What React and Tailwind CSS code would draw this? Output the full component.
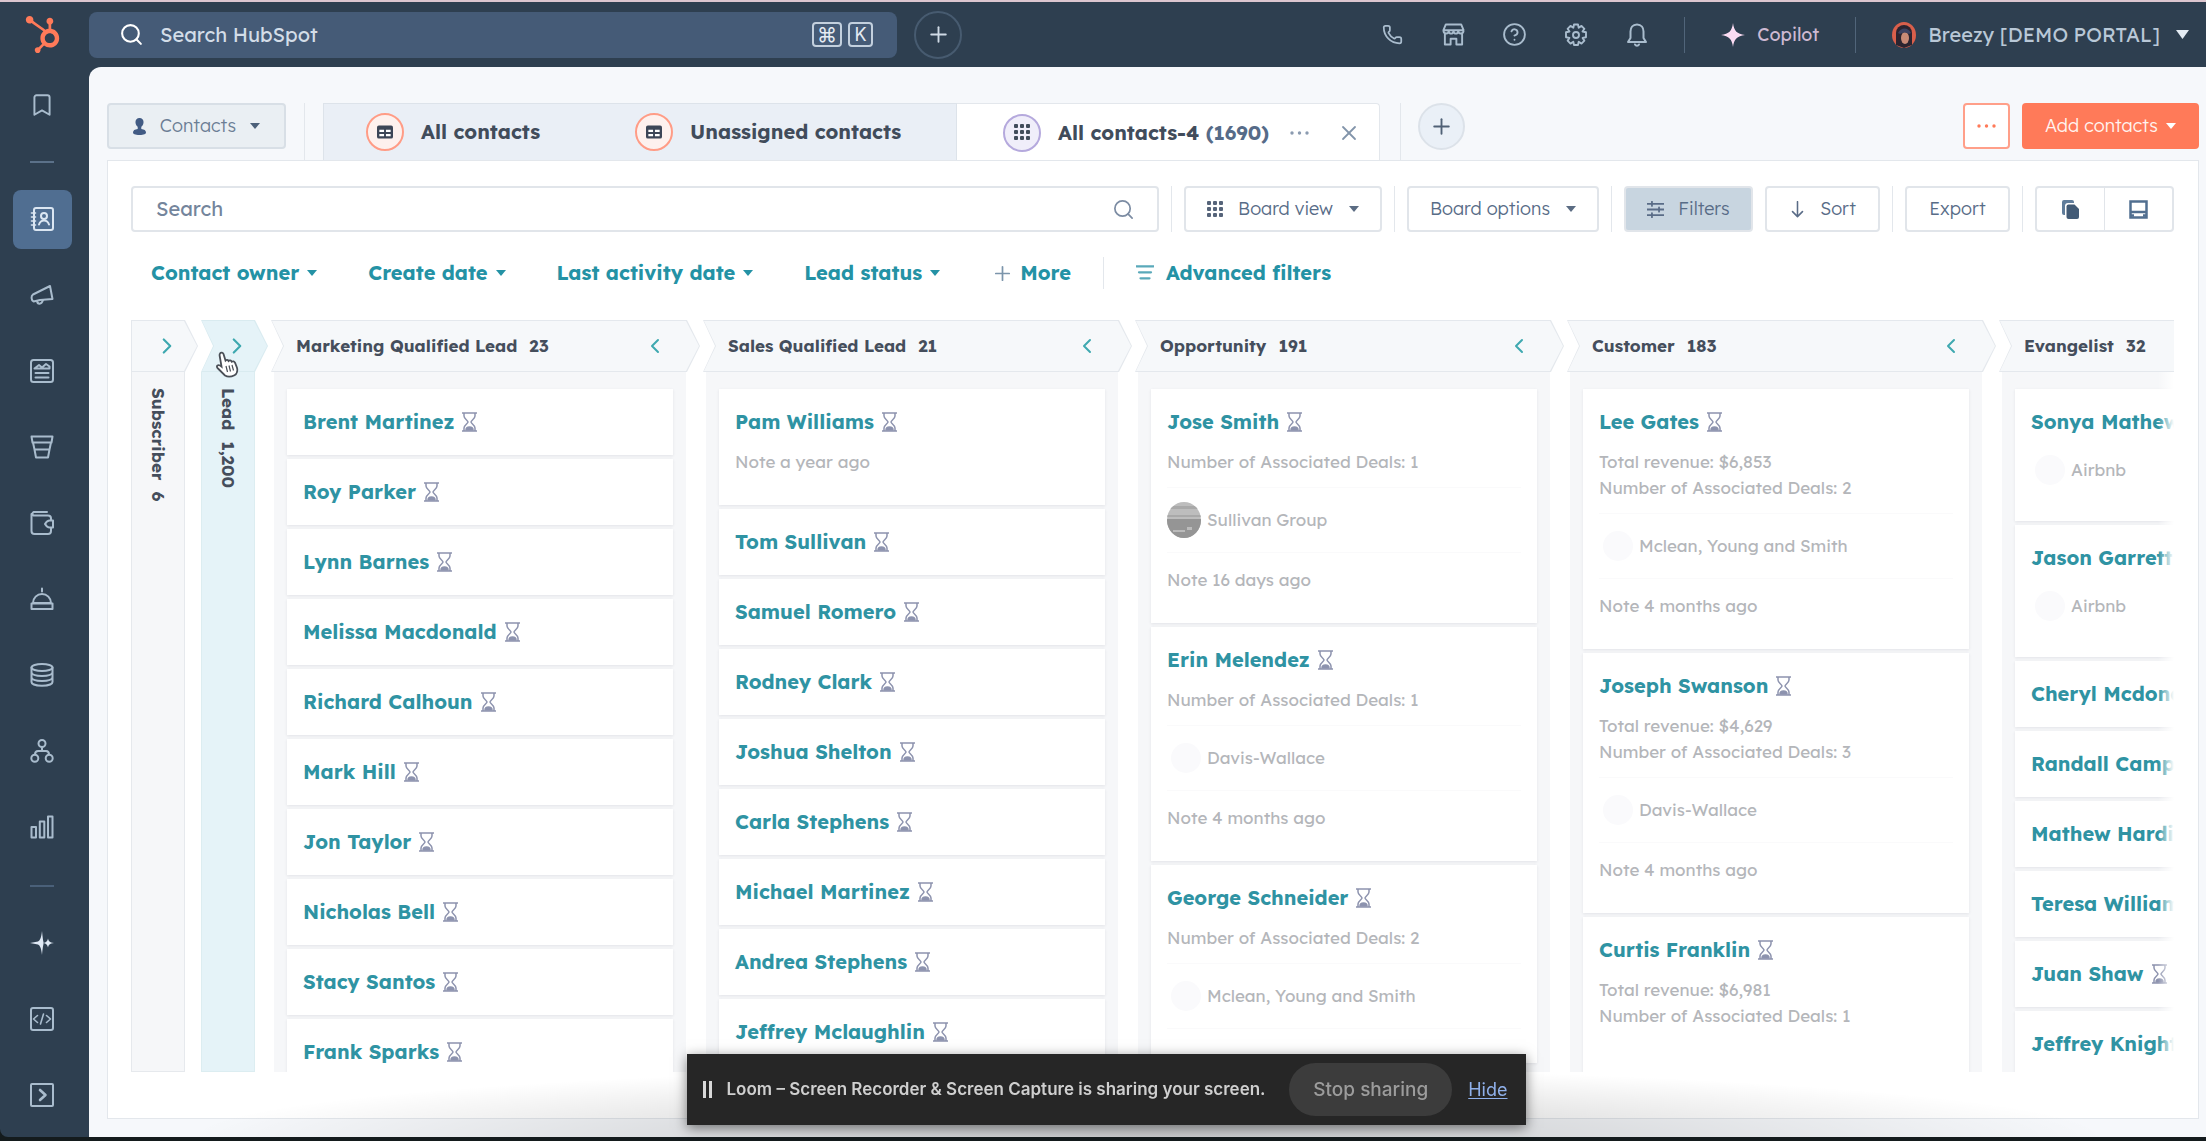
import React from "react";
import { FaHubspot } from "react-icons/fa6";
import {
  Bookmark,
  ChevronLeft,
  ChevronRight,
  CircleHelp,
  Phone,
  Plus,
  Search,
  X,
} from "lucide-react";

const Icon = ({ size = 24, width = 2, className = "", children }) => (
  <svg
    width={size}
    height={size}
    viewBox="0 0 24 24"
    fill="none"
    stroke="currentColor"
    strokeWidth={width}
    strokeLinecap="round"
    strokeLinejoin="round"
    className={`shrink-0 ${className}`}
    aria-hidden="true"
  >
    {children}
  </svg>
);

const ContactBook = () => (
  <Icon>
    <rect x="4" y="1" width="19" height="22" rx="2" />
    <path d="M1.5 6h4M1.5 10h4M1.5 14h4M1.5 18h4" strokeWidth="1.6" />
    <circle cx="14" cy="9" r="3" />
    <path d="M9 17.5c1-3 3-4 5-4s4 1 5 4" />
  </Icon>
);

const Horn = () => (
  <Icon>
    <path d="M20 3 22.5 16 10 17 3.5 18.5C1 17 1 13 3 11.5z" />
    <path d="M7 18c.5 3.5 4.5 4 6-1" />
  </Icon>
);

const Article = () => (
  <Icon>
    <rect x="1" y="1" width="22" height="22" rx="2.5" />
    <path d="M4.5 9.5 9 6l3 2.5 4-3.5 3.5 2.5v2zM5.5 14h13M5.5 18.5h13" />
  </Icon>
);

const Funnel = () => (
  <Icon>
    <path d="M1.5 1.5h21l-1 6h-19zM3 7.5h18l-1.5 7h-15zM4.5 14.5h15l-1.5 8H6z" />
  </Icon>
);

const WalletIcon = () => (
  <Icon>
    <path d="M21 9V7.5a3 3 0 0 0-3-3H3.5a2 2 0 0 1 0-3.5H17M1.5 3v17a3 3 0 0 0 3 3h13.5a3 3 0 0 0 3-3v-3" />
    <path d="M15 13c1.5-2.5 3-3.5 4.500-3.5H23v7h-3.500c-1.500 0-3-1-4.500-3.500z" />
  </Icon>
);

const ServiceBell = () => (
  <Icon>
    <path d="M12 1.5v3M3 16a9 9 0 0 1 18 0zM1.5 16.5h21V22h-21z" />
  </Icon>
);

const DataStack = () => (
  <Icon>
    <ellipse cx="12" cy="4.5" rx="10.5" ry="3.5" />
    <path d="M1.5 4.5V19c0 5 21 5 21 0V4.5M1.5 9.5c1 4.5 20 4.5 21 0M1.5 14.5c1 4.5 20 4.5 21 0" />
  </Icon>
);

const Nodes = () => (
  <Icon>
    <circle cx="12" cy="4.5" r="3.5" />
    <circle cx="4.8" cy="19.2" r="3.5" />
    <circle cx="19.2" cy="19.2" r="3.5" />
    <path d="M12 8v4M5 15.5C5 13 6 12 8 12h8c2 0 3 1 3 3.5" />
  </Icon>
);

const Bars = () => (
  <Icon>
    <path d="M1.5 12H6v10.5H1.5zM9.8 6.5h4.5v16H9.8zM18 1.5h4.5v21H18z" />
  </Icon>
);

const Sparkles = () => (
  <Icon className="text-[#dfe9f5]">
    <path
      d="M12 0c.6 6 1 9 1.5 11v2c-.5 2-.9 5-1.5 11-.8-7-2-9.500-4-10.500L0 12l8-1.500C10 9.500 11.200 7 12 0z"
      fill="currentColor"
      stroke="none"
    />
    <path d="M18 7.5c.7 2.8 1.500 3.800 6 4.500-4.500.7-5.300 1.700-6 4.500-.7-2.800-1.500-3.800-5-4.500 3.500-.7 4.300-1.700 5-4.500z" fill="currentColor" stroke="none" />
  </Icon>
);

const CodeBox = () => (
  <Icon>
    <rect x="1" y="1" width="22" height="22" rx="2" />
    <path d="m7.5 8.5-4 3.5 4 3.5M16.5 8.5l4 3.5-4 3.5M13.5 7l-3 10" strokeWidth="1.6" />
  </Icon>
);

const ExpandBox = () => (
  <Icon>
    <rect x="1" y="1" width="22" height="22" rx="1" />
    <path d="m10 7 5.500 5-5.500 5" strokeWidth="2.6" />
  </Icon>
);

const StoreIcon = () => (
  <Icon size={23}>
    <path d="M4 1.5h16l2.5 6H1.5zM1.5 7.5c0 4.5 5 4.5 5.5 1 .5 3.500 4.500 3.500 5 0 .5 3.500 4.500 3.500 5 0 .5 3.500 5.500 3.500 5.500-1M3 12v10.500h6v-6h6v6h6V12" />
  </Icon>
);

// Eight teeth around the hub.
const GearIcon = () => (
  <Icon size={24} width={1.9}>
    <path d="M10 1.5h4l.7 3.200 2.800-1.800 2.900 2.900-1.900 2.700 3.500.8v4.900l-3.400.7 1.800 2.800-2.900 2.900-2.800-1.800-.7 3.200h-4l-.7-3.200-2.800 1.800-2.900-2.900 1.800-2.800-3.400-.7V9.300l3.500-.8-1.900-2.700 2.900-2.900 2.800 1.800z" />
    <circle cx="12" cy="12" r="3" />
  </Icon>
);

const BellIcon = () => (
  <Icon size={24}>
    <path d="M12 1.5c-4.500 0-6.500 3.500-6.500 7V15L3 19h18l-2.500-4V8.500c0-3.500-2-7-6.500-7zM10 21.500c.8 1.500 3.200 1.500 4 0" />
  </Icon>
);

const Caret = ({ className = "" }) => (
  <svg width="10" height="6" viewBox="0 0 10 6" className={`shrink-0 ${className}`} aria-hidden="true">
    <path d="M0 0h10L5 6z" fill="currentColor" />
  </svg>
);

const GridDots = ({ className = "" }) => (
  <svg width="17" height="17" viewBox="0 0 17 17" fill="currentColor" className={`shrink-0 ${className}`} aria-hidden="true">
    {[0, 6, 12].map((y) =>
      [0, 6, 12].map((x) => <rect key={`${x}-${y}`} x={x} y={y} width="4" height="4" rx="1" />)
    )}
  </svg>
);

const TableIcon = () => (
  <svg width="16" height="14" viewBox="0 0 17 14" className="text-[#3c4657]" aria-hidden="true">
    <rect width="17" height="14" rx="2" fill="currentColor" />
    <path d="M2.5 4.5h5V7h-5zM9.5 4.5h5V7h-5zM2.5 9h5v2.500h-5zM9.5 9h5v2.500h-5z" fill="#fff" />
  </svg>
);

const Dots = () => (
  <svg width="19" height="4" viewBox="0 0 19 4" fill="currentColor" aria-hidden="true">
    <circle cx="2" cy="2" r="1.7" />
    <circle cx="9.5" cy="2" r="1.7" />
    <circle cx="17" cy="2" r="1.7" />
  </svg>
);

const Hourglass = () => (
  <svg width="15" height="20" viewBox="0 0 15 20" fill="none" stroke="currentColor" strokeWidth="1.5" className="shrink-0 text-[#8d93ae]" aria-hidden="true">
    <path d="M0 1h15M0 19h15M2 1v3c0 3 4 4.500 4 6s-4 3-4 6v3M13 1v3c0 3-4 4.500-4 6s4 3 4 6v3" />
    <path d="M4 18c0-2 1.500-3 3.500-3s3.500 1 3.500 3z" fill="currentColor" />
  </svg>
);

const NAV = [
  ["Contacts", ContactBook],
  ["Marketing", Horn],
  ["Content", Article],
  ["Sales", Funnel],
  ["Commerce", WalletIcon],
  ["Service", ServiceBell],
  ["Data", DataStack],
  ["Automations", Nodes],
  ["Reporting", Bars],
];

const NAV_BOTTOM = [
  ["Breeze", Sparkles],
  ["Development", CodeBox],
  ["Expand", ExpandBox],
];

const plain = (names) => names.map((name) => ({ name }));

const COLUMNS = [
  {
    title: "Marketing Qualified Lead",
    count: "23",
    cards: plain([
      "Brent Martinez",
      "Roy Parker",
      "Lynn Barnes",
      "Melissa Macdonald",
      "Richard Calhoun",
      "Mark Hill",
      "Jon Taylor",
      "Nicholas Bell",
      "Stacy Santos",
      "Frank Sparks",
    ]),
  },
  {
    title: "Sales Qualified Lead",
    count: "21",
    cards: [
      { name: "Pam Williams", note: "Note a year ago" },
      ...plain([
        "Tom Sullivan",
        "Samuel Romero",
        "Rodney Clark",
        "Joshua Shelton",
        "Carla Stephens",
        "Michael Martinez",
        "Andrea Stephens",
        "Jeffrey Mclaughlin",
      ]),
    ],
  },
  {
    title: "Opportunity",
    count: "191",
    cards: [
      {
        name: "Jose Smith",
        lines: ["Number of Associated Deals: 1"],
        company: "Sullivan Group",
        photo: true,
        note: "Note 16 days ago",
      },
      {
        name: "Erin Melendez",
        lines: ["Number of Associated Deals: 1"],
        company: "Davis-Wallace",
        note: "Note 4 months ago",
      },
      {
        name: "George Schneider",
        lines: ["Number of Associated Deals: 2"],
        company: "Mclean, Young and Smith",
      },
    ],
  },
  {
    title: "Customer",
    count: "183",
    cards: [
      {
        name: "Lee Gates",
        lines: ["Total revenue: $6,853", "Number of Associated Deals: 2"],
        company: "Mclean, Young and Smith",
        note: "Note 4 months ago",
      },
      {
        name: "Joseph Swanson",
        lines: ["Total revenue: $4,629", "Number of Associated Deals: 3"],
        company: "Davis-Wallace",
        note: "Note 4 months ago",
      },
      {
        name: "Curtis Franklin",
        lines: ["Total revenue: $6,981", "Number of Associated Deals: 1"],
        open: true,
      },
    ],
  },
  {
    title: "Evangelist",
    count: "32",
    cards: [
      { name: "Sonya Mathews", company: "Airbnb" },
      { name: "Jason Garrett", company: "Airbnb" },
      ...plain([
        "Cheryl Mcdonald",
        "Randall Campbell",
        "Mathew Harding",
        "Teresa Williams",
        "Juan Shaw",
        "Jeffrey Knight",
      ]),
    ],
  },
];

const NavItem = ({ label, icon: Glyph, active }) => (
  <a href="#" aria-label={label} className="flex h-[76px] items-center justify-center">
    <span
      className={
        active
          ? "flex size-[59px] items-center justify-center rounded-lg bg-[#506e91] text-[#dbe6f2]"
          : "flex size-[59px] items-center justify-center text-[#a9bccd]"
      }
    >
      <Glyph />
    </span>
  </a>
);

const Sidebar = () => (
  <aside className="flex w-[89px] shrink-0 flex-col pr-[5px] pb-1">
    <a href="#" aria-label="HubSpot" className="flex h-[65px] items-center justify-center text-[#ff7a59]">
      <FaHubspot size={37} />
    </a>
    <nav className="flex flex-1 flex-col">
      <NavItem label="Bookmarks" icon={() => <Bookmark size={26} strokeWidth={1.8} />} />
      <div className="flex h-[38px] items-center justify-center">
        <span className="h-0.5 w-6 bg-[#5b7189]" />
      </div>
      {NAV.map(([label, icon], i) => (
        <NavItem key={label} label={label} icon={icon} active={i === 0} />
      ))}
      <div className="mt-auto">
        <div className="flex h-[38px] items-center justify-center">
          <span className="h-0.5 w-6 bg-[#4a6079]" />
        </div>
        {NAV_BOTTOM.map(([label, icon]) => (
          <NavItem key={label} label={label} icon={icon} />
        ))}
      </div>
    </nav>
  </aside>
);

const TopBar = () => (
  <header className="flex h-[65px] shrink-0 items-center">
    <label className="flex h-[46px] w-[808px] items-center rounded-lg bg-[#455b77] pr-6 pl-[30px]">
      <Search size={25} className="text-white" aria-hidden="true" />
      <input
        type="text"
        placeholder="Search HubSpot"
        aria-label="Search HubSpot"
        className="ml-4 min-w-0 flex-1 bg-transparent text-xl text-white outline-none placeholder:text-[#d3dde8]"
      />
      <kbd className="flex h-[25px] w-[30px] items-center justify-center rounded border-2 border-[#c3d0de] font-[Inter,sans-serif] text-xl text-[#e4ebf3]">⌘</kbd>
      <kbd className="ml-1.5 flex h-[25px] w-[25px] items-center justify-center rounded border-2 border-[#c3d0de] font-[Inter,sans-serif] text-lg text-[#e4ebf3]">K</kbd>
    </label>
    <button aria-label="Create" className="ml-[17px] flex size-[48px] items-center justify-center rounded-full border-2 border-[#475b70] text-[#cfdae5]">
      <Plus size={25} strokeWidth={1.8} />
    </button>
    <div className="ml-auto flex items-center text-[#a9bccd]">
      <div className="flex items-center">
        <button aria-label="Calling" className="flex w-[61px] justify-center"><Phone size={21} /></button>
        <button aria-label="Marketplace" className="flex w-[61px] justify-center"><StoreIcon /></button>
        <button aria-label="Help" className="flex w-[61px] justify-center"><CircleHelp size={25} strokeWidth={1.8} /></button>
        <button aria-label="Settings" className="flex w-[61px] justify-center"><GearIcon /></button>
        <button aria-label="Notifications" className="flex w-[61px] justify-center"><BellIcon /></button>
      </div>
      <span className="ml-[17px] h-9 w-px bg-[#51657a]" />
      <button className="flex items-center px-9 text-lg text-[#cdb9d2]">
        <svg width="24" height="24" viewBox="0 0 24 24" className="mr-3" aria-hidden="true">
          <path d="M12 0c1 8 4 11 12 12-8 1-11 4-12 12-1-8-4-11-12-12C8 11 11 8 12 0z" fill="#fbdcf3" />
        </svg>
        Copilot
      </button>
      <span className="h-9 w-px bg-[#51657a]" />
      <button className="flex items-center pr-[17px] pl-9 text-xl text-[#b9c8d7]">
        <svg width="24" height="26" viewBox="0 0 24 26" className="mr-3" aria-hidden="true">
          <ellipse cx="12" cy="13" rx="12" ry="13" fill="#d95f4b" />
          <path d="M4 23V11a8 8 0 0 1 16 0v12l-8 3z" fill="#2b2430" />
          <ellipse cx="13" cy="16" rx="4" ry="6" fill="#c98a76" />
          <path d="M6 11c3-6 10-6 13 0l-2 1c-3-2-6-2-9 0z" fill="#3d4262" />
        </svg>
        Breezy [DEMO PORTAL]
        <svg width="13" height="9" viewBox="0 0 13 9" className="ml-4 text-[#e4ecf4]" aria-hidden="true">
          <path d="M0 0h13L6.500 9z" fill="currentColor" />
        </svg>
      </button>
    </div>
  </header>
);

const Rule = ({ className = "" }) => <span className={`w-px self-stretch bg-[#e3e7ec] ${className}`} />;

const ViewTabs = () => (
  <div className="flex h-[57px] items-start">
    <button className="flex h-[46px] w-[179px] items-center justify-center rounded-sm border-2 border-[#d8dfe6] bg-[#eaeff3] text-lg font-light text-[#6c7e95]">
      <svg width="13" height="17" viewBox="0 0 13 17" fill="#425b84" className="mr-3.5" aria-hidden="true">
        <path d="M6.500 0a4 4 0 0 1 4 4.500C10.500 7 9 8 8.300 8.800V11c3 .3 4.700 1.500 4.700 3.500 0 1.500-2 2.500-6.500 2.500S0 16 0 14.500C0 12.500 1.700 11.300 4.700 11V8.800C4 8 2.500 7 2.500 4.500a4 4 0 0 1 4-4.500z" />
      </svg>
      Contacts
      <Caret className="ml-3.5 text-[#4c6079]" />
    </button>
    <Rule className="ml-[18px]" />
    <div role="tablist" className="ml-[18px] flex self-stretch text-xl font-bold text-[#414c5b]">
      <button role="tab" className="flex w-[269px] items-center border-t border-l border-[#dde3ea] bg-[#eaeff6] pl-[42px]">
        <span className="mr-[17px] flex size-[38px] items-center justify-center rounded-full border-2 border-[#ff9c86] bg-[#fdf1ee]"><TableIcon /></span>
        All contacts
      </button>
      <button role="tab" className="flex w-[365px] items-center border-t border-r border-[#dde3ea] bg-[#eaeff6] pl-[43px]">
        <span className="mr-[17px] flex size-[38px] items-center justify-center rounded-full border-2 border-[#ff9c86] bg-[#fdf1ee]"><TableIcon /></span>
        Unassigned contacts
      </button>
      <div role="tab" aria-selected="true" className="-mb-px flex w-[423px] items-center rounded-tr border-t border-r border-[#e3e7ec] bg-white pl-[46px]">
        <span className="mr-[17px] flex size-[38px] shrink-0 items-center justify-center rounded-full border-2 border-[#b5a9dd] bg-[#f0eefa] text-[#414c5b]"><GridDots /></span>
        <span className="whitespace-nowrap">All contacts-4 <span className="text-[#566b88]">(1690)</span></span>
        <button aria-label="More" className="ml-auto text-[#8b9bb0]"><Dots /></button>
        <button aria-label="Close" className="mr-[18px] ml-7 text-[#8294aa]"><X size={24} strokeWidth={1.8} /></button>
      </div>
    </div>
    <Rule className="ml-5" />
    <button aria-label="Add view" className="ml-[17px] flex size-[47px] items-center justify-center rounded-full border-2 border-[#dce2e9] bg-[#eaf0f7] text-[#506176]">
      <Plus size={25} strokeWidth={1.8} />
    </button>
    <button aria-label="More actions" className="ml-auto flex h-[46px] w-[47px] items-center justify-center rounded border-2 border-[#ff9f89] bg-white text-[#ff7a59]">
      <Dots />
    </button>
    <button className="ml-3 flex h-[46px] w-[177px] items-center justify-center rounded bg-[#ff7a59] text-lg font-light text-[#fff3ef]">
      Add contacts
      <Caret className="ml-2 text-white" />
    </button>
  </div>
);

const ToolButton = ({ className = "", children }) => (
  <button className={`flex h-[46px] shrink-0 items-center justify-center rounded-sm border-2 border-[#e1e5ea] text-lg font-light text-[#586c87] ${className}`}>
    {children}
  </button>
);

const Toolbar = () => (
  <div className="flex items-center gap-3">
    <label className="flex h-[46px] min-w-0 flex-1 items-center rounded-sm border-2 border-[#e1e5ea] pr-[22px] pl-[23px]">
      <input
        type="text"
        placeholder="Search"
        aria-label="Search contacts"
        className="min-w-0 flex-1 bg-transparent text-xl outline-none placeholder:text-[#74859c]"
      />
      <Search size={23} strokeWidth={1.8} className="text-[#7c8ca3]" aria-hidden="true" />
    </label>
    <Rule />
    <ToolButton className="w-[198px]">
      <GridDots className="mr-3.5 text-[#56647a]" />
      Board view
      <Caret className="ml-4 text-[#5b6c83]" />
    </ToolButton>
    <Rule />
    <ToolButton className="w-[192px]">
      Board options
      <Caret className="ml-4 text-[#5b6c83]" />
    </ToolButton>
    <Rule />
    <ToolButton className="w-[129px] border-[#cbd6e2] bg-[#c8d5e0]">
      <Icon size={17} width={2.5} className="mr-3.5 text-[#5a6c87]">
        <path d="M0 4h24M0 12h24M0 20h24M7 1v6M17 9v6M7 17v6" />
      </Icon>
      Filters
    </ToolButton>
    <ToolButton className="w-[115px]">
      <Icon size={17} width={2.2} className="mr-3.5 text-[#5a6c87]">
        <path d="M12 1v21M5 15l7 7 7-7" />
      </Icon>
      Sort
    </ToolButton>
    <Rule />
    <ToolButton className="w-[105px]">Export</ToolButton>
    <Rule />
    <div className="flex">
      <button aria-label="Clone view" className="flex h-[46px] w-[70px] items-center justify-center rounded-l-sm border-2 border-r border-[#e1e5ea]">
        <svg width="17" height="19" viewBox="0 0 17 19" aria-hidden="true">
          <path d="M2 0h8a2 2 0 0 1 2 2v1H6a3 3 0 0 0-3 3v9H2a2 2 0 0 1-2-2V2a2 2 0 0 1 2-2z" fill="#607d9b" />
          <path d="M6.500 4.500h6l4.500 4.500v8a2 2 0 0 1-2 2H6.500a2 2 0 0 1-2-2V6.500a2 2 0 0 1 2-2z" fill="#425b76" />
        </svg>
      </button>
      <button aria-label="Save view" className="flex h-[46px] w-[69px] items-center justify-center rounded-r-sm border-2 border-l-0 border-[#e1e5ea]">
        <svg width="19" height="19" viewBox="0 0 19 19" fill="none" stroke="#516f90" strokeWidth="2.5" aria-hidden="true">
          <path d="M1.500 1.500h16v16h-16zM2 12h15" />
          <path d="M2 15.500h3M14 15.500h3" />
        </svg>
      </button>
    </div>
  </div>
);

const FilterButton = ({ children }) => (
  <button className="flex items-center gap-2 whitespace-nowrap">
    {children}
    <Caret />
  </button>
);

const FilterRow = () => (
  <div className="flex h-[88px] items-center pb-1.5 pl-5 text-xl font-bold text-[#2492a5]">
    <div className="flex items-center gap-[51px]">
      <FilterButton>Contact owner</FilterButton>
      <FilterButton>Create date</FilterButton>
      <FilterButton>Last activity date</FilterButton>
      <FilterButton>Lead status</FilterButton>
      <button className="flex items-center gap-1.5">
        <Plus size={23} strokeWidth={1.8} className="text-[#7c95ab]" aria-hidden="true" />
        More
      </button>
    </div>
    <span className="mx-8 h-8 w-px bg-[#e3e7ec]" />
    <button className="flex items-center gap-3">
      <Icon size={18} width={3} className="text-[#5aa9ba]">
        <path d="M1 3h22M4 11h16M6 19h12" />
      </Icon>
      Advanced filters
    </button>
  </div>
);

// Two stacked copies of one arrow shape: the outer gives the outline, the inner the fill.
const ArrowHead = ({ first, hot, className = "", children }) => {
  const shape = first
    ? "[clip-path:polygon(0_0,calc(100%_-_13px)_0,100%_50%,calc(100%_-_13px)_100%,0_100%)]"
    : "[clip-path:polygon(0_0,calc(100%_-_13px)_0,100%_50%,calc(100%_-_13px)_100%,0_100%,12px_50%)]";
  return (
    <div className={`h-[52px] shrink-0 p-px ${hot ? "bg-[#d9ebf0]" : "bg-[#e4e8ed]"} ${shape}`}>
      <div className={`flex h-full items-center ${hot ? "bg-[#e5f3f8]" : "bg-[#f6f8fa]"} ${shape} ${className}`}>
        {children}
      </div>
    </div>
  );
};

const CollapsedColumn = ({ title, count, first, hot, children }) => (
  <section className="relative flex w-[67px] shrink-0 flex-col">
    <ArrowHead first={first} hot={hot} className="justify-center">
      <button aria-label={`Expand ${title}`} className="pl-1 text-[#3fa9b0]"><ChevronRight size={26} /></button>
    </ArrowHead>
    <div
      className={
        hot
          ? "mr-[13px] flex flex-1 justify-center border border-t-0 border-[#dcedf1] bg-[#e5f3f8] pt-4"
          : "mr-[13px] flex flex-1 justify-center border border-t-0 border-[#e6e9ed] bg-[#f6f7f9] pt-4"
      }
    >
      <h2 className="text-[17px] leading-6 font-bold whitespace-pre text-[#454e5c] [writing-mode:vertical-rl]">
        {title}{"  "}{count}
      </h2>
    </div>
    {children}
  </section>
);

const Company = ({ name, photo, framed }) => (
  <div className={framed ? "mt-3 mb-3.5 flex h-[66px] items-center border-y border-[#fafafb]" : "flex h-[42px] items-center"}>
    {photo ? (
      <svg width="34" height="36" viewBox="0 0 34 36" className="mr-1.5" aria-hidden="true">
        <defs>
          <clipPath id="photo-round"><ellipse cx="17" cy="18" rx="17" ry="18" /></clipPath>
        </defs>
        <g clipPath="url(#photo-round)">
          <rect width="34" height="36" fill="#bdbdbd" />
          <path d="M0 4h34v3H0zM0 13h34v2H0z" fill="#a9a9a9" />
          <path d="M0 17h34v19H0z" fill="#959595" />
          <path d="M6 28h12v2H6zM20 25h5v3h-5z" fill="#bbb" />
        </g>
      </svg>
    ) : (
      <span className="mr-1.5 ml-1 size-[30px] rounded-full bg-[#fafafc]" />
    )}
    {name}
  </div>
);

const Card = ({ name, lines = [], company, photo, note, open }) => {
  const detailed = lines.length > 0 || company || note;
  return (
    <article className={`bg-white px-4 py-5 shadow-[0_1px_3px_rgba(60,60,80,0.1)] ${open ? "flex-1" : "shrink-0"}`}>
      <h3 className="flex h-[26px] items-center gap-2 whitespace-nowrap">
        <a href="#" className="text-xl font-bold text-[#2f93a3]">{name}</a>
        <Hourglass />
      </h3>
      {detailed && (
        <div className="mt-3.5 mb-2.5 text-[17px] leading-[26px] whitespace-nowrap text-[#b4b6ba]">
          {lines.map((line) => (
            <p key={line}>{line}</p>
          ))}
          {company && <Company name={company} photo={photo} framed={lines.length > 0} />}
          {note && <p>{note}</p>}
        </div>
      )}
    </article>
  );
};

const Column = ({ title, count, cards }) => (
  <section className="flex w-[429px] shrink-0 flex-col">
    <ArrowHead className="pr-8 pl-6 text-[17px] font-bold text-[#454e5c]">
      <h2>{title}</h2>
      <span className="ml-3">{count}</span>
      <button aria-label={`Collapse ${title}`} className="ml-auto text-[#3fa9b0]"><ChevronLeft size={24} /></button>
    </ArrowHead>
    <div className="mr-[14px] ml-[3px] flex min-h-0 flex-1 flex-col gap-1 overflow-hidden bg-[#f6f7f9] px-[13px] pt-[17px]">
      {cards.map((card) => (
        <Card key={card.name} {...card} />
      ))}
    </div>
  </section>
);

const HandCursor = () => (
  <svg width="24" height="27" viewBox="0 0 24 27" className="absolute top-[31px] left-[14px]" aria-hidden="true">
    <path
      d="M5 2.500C6 1 8 1.500 8.500 3l2 6.500c1-1 2.500-.8 3 .5 1-1 2.500-.7 3.200.7 1.200-.8 2.600-.3 3.300 1l2 5c.8 3-.2 6.300-2.500 7.500-3 1.500-7 1.800-9.500.3L3.500 18c-1.700-1.500-2-2.700-1-3.500s2.500-.3 4 1L4.700 5c-.2-1-.2-1.800.3-2.500z"
      fill="#fff"
      stroke="#4a4f57"
      strokeWidth="1.8"
    />
    <path d="m11 15 1.500 6M14 14.500l1.500 6M17 14l1.500 5.500" stroke="#4a4f57" strokeWidth="1.2" />
  </svg>
);

const Board = () => (
  <div className="relative flex min-h-0 flex-1 gap-[3px] overflow-hidden">
    <CollapsedColumn title="Subscriber" count="6" first />
    <CollapsedColumn title="Lead" count="1,200" hot>
      <HandCursor />
    </CollapsedColumn>
    {COLUMNS.map((column) => (
      <Column key={column.title} {...column} />
    ))}
    <div className="pointer-events-none absolute top-[52px] right-0 bottom-0 w-4 bg-linear-to-r from-white/0 to-white" />
  </div>
);

const SharingBar = () => (
  <div className="fixed inset-x-0 bottom-4 flex justify-center pl-1.5">
    <div className="flex h-[71px] w-[839px] items-center bg-[#262626] pr-[18px] pl-4 font-[Inter,sans-serif] text-lg whitespace-nowrap shadow-[0_3px_12px_rgba(0,0,0,0.5)]">
      <svg width="9" height="17" viewBox="0 0 9 17" fill="#d8d8d8" aria-hidden="true">
        <path d="M0 0h3v17H0zM6 0h3v17H6z" />
      </svg>
      <p className="ml-[15px] flex-1 text-[17px] font-semibold text-[#cfcfcf]">
        Loom – Screen Recorder &amp; Screen Capture is sharing your screen.
      </p>
      <button className="h-[53px] w-[163px] rounded-full bg-[#3c3c3c] text-[19px] font-medium text-[#9c9c9c]">Stop sharing</button>
      <a href="#" className="ml-4 text-[#8fb0ea] underline underline-offset-2">Hide</a>
    </div>
  </div>
);

export default function App() {
  return (
    <div className="flex h-screen flex-col overflow-hidden bg-[#141b1d] font-[Lexend,Inter,sans-serif]">
      <div className="h-0.5 shrink-0 bg-[#dcc6cf]" />
      <div className="mb-1 flex min-h-0 flex-1 overflow-hidden rounded-bl-lg bg-[#2e3f50]">
        <Sidebar />
        <div className="flex min-w-0 flex-1 flex-col">
          <TopBar />
          <main className="relative flex min-h-0 flex-1 flex-col rounded-tl-xl bg-[#f6f8fb] pt-9 pr-[7px] pb-[18px] pl-[18px]">
            <ViewTabs />
            <div className="flex min-h-0 flex-1 flex-col border border-[#e3e7ec] bg-white pt-[25px] pr-6 pb-[46px] pl-[23px]">
              <Toolbar />
              <FilterRow />
              <Board />
            </div>
            <div className="pointer-events-none absolute inset-x-[100px] bottom-0 h-[70px] bg-[radial-gradient(ellipse_50%_100%_at_50%_100%,rgba(0,0,0,0.18),rgba(0,0,0,0.1)_50%,transparent)]" />
          </main>
        </div>
      </div>
      <SharingBar />
    </div>
  );
}
